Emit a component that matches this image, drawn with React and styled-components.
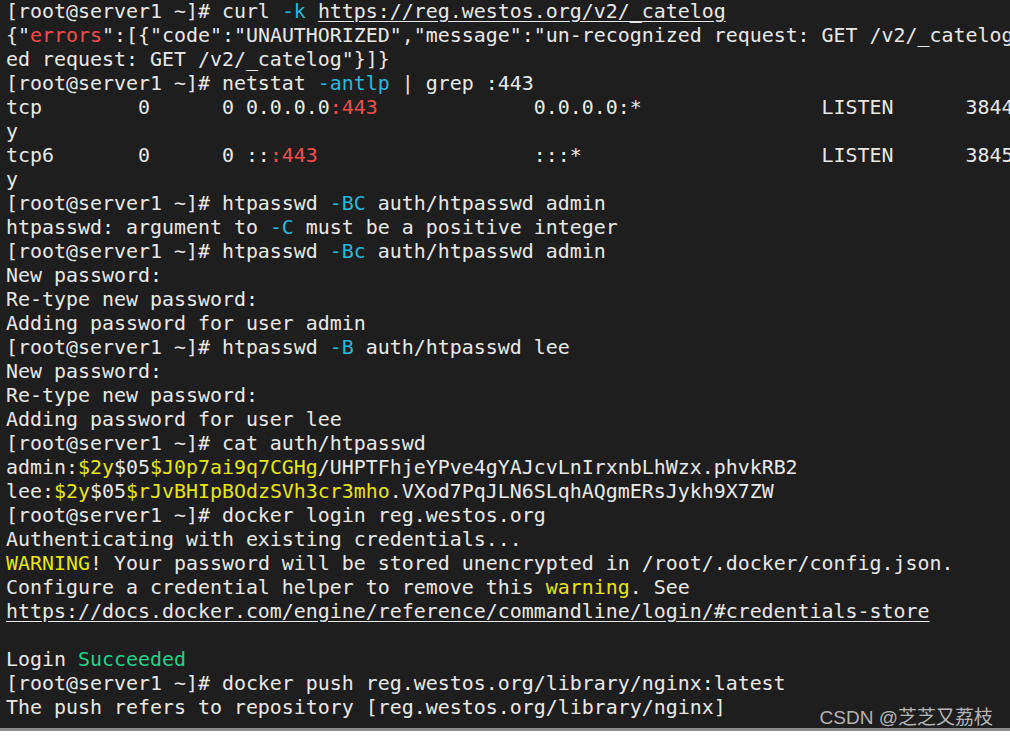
import React from "react";
import styled, { createGlobalStyle, css } from "styled-components";

const GlobalStyle = createGlobalStyle`
  html, body {
    margin: 0;
    padding: 0;
    background: #ffffff;
  }
`;

const TERMINAL = styled.div`
  position: relative;
  width: 1010px;
  height: 731px;
  box-sizing: border-box;
  padding: 0 0 0 6px;
  background: #1e1e1e;
  border-bottom: 3px solid #8c8c8c;
  overflow: hidden;
  font-family: "DejaVu Sans Mono", "Liberation Mono", monospace;
  font-size: 19.93px;
  line-height: 24px;
  color: #e8e8e8;
`;

const LINE = styled.div`
  height: 24px;
  white-space: pre;
`;

const colors = {
  red: "#f14c4c",
  cyan: "#29b8db",
  yellow: "#e5e510",
  green: "#23d18b",
};

const TOKEN = styled.span`
  color: ${(props) => colors[props.kind] || "inherit"};
  ${(props) =>
    props.kind === "link" &&
    css`
      text-decoration: underline;
      text-underline-offset: 3px;
    `}
`;

const WATERMARK = styled.div`
  position: absolute;
  right: 17px;
  bottom: 0;
  font-family: "Liberation Sans", "Noto Sans CJK SC", sans-serif;
  font-size: 19px;
  line-height: 20px;
  color: #b4b4b4;
  white-space: nowrap;
`;

const P = "[root@server1 ~]# ";

// each line is a list of [text, kind]
const lines = [
  [[P + "curl "], ["-k", "cyan"], [" "], ["https://reg.westos.org/v2/_catelog", "link"]],
  [['{"'], ["errors", "red"], ['":[{"code":"UNAUTHORIZED","message":"un-recognized request: GET /v2/_catelog']],
  [['ed request: GET /v2/_catelog"}]}']],
  [[P + "netstat "], ["-antlp", "cyan"], [" | grep :443"]],
  [["tcp        0      0 0.0.0.0"], [":443", "red"], ["             0.0.0.0:*               LISTEN      3844"]],
  [["y"]],
  [["tcp6       0      0 ::"], [":443", "red"], ["                  :::*                    LISTEN      3845"]],
  [["y"]],
  [[P + "htpasswd "], ["-BC", "cyan"], [" auth/htpasswd admin"]],
  [["htpasswd: argument to "], ["-C", "cyan"], [" must be a positive integer"]],
  [[P + "htpasswd "], ["-Bc", "cyan"], [" auth/htpasswd admin"]],
  [["New password:"]],
  [["Re-type new password:"]],
  [["Adding password for user admin"]],
  [[P + "htpasswd "], ["-B", "cyan"], [" auth/htpasswd lee"]],
  [["New password:"]],
  [["Re-type new password:"]],
  [["Adding password for user lee"]],
  [[P + "cat auth/htpasswd"]],
  [["admin:"], ["$2y", "yellow"], ["$05"], ["$J0p7ai9q7CGHg", "yellow"], ["/UHPTFhjeYPve4gYAJcvLnIrxnbLhWzx.phvkRB2"]],
  [["lee:"], ["$2y", "yellow"], ["$05"], ["$rJvBHIpBOdzSVh3cr3mho", "yellow"], [".VXod7PqJLN6SLqhAQgmERsJykh9X7ZW"]],
  [[P + "docker login reg.westos.org"]],
  [["Authenticating with existing credentials..."]],
  [["WARNING", "yellow"], ["! Your password will be stored unencrypted in /root/.docker/config.json."]],
  [["Configure a credential helper to remove this "], ["warning", "yellow"], [". See"]],
  [["https://docs.docker.com/engine/reference/commandline/login/#credentials-store", "link"]],
  [[""]],
  [["Login "], ["Succeeded", "green"]],
  [[P + "docker push reg.westos.org/library/nginx:latest"]],
  [["The push refers to repository [reg.westos.org/library/nginx]"]],
];

const App = () => {
  return (
    <>
      <GlobalStyle />
      <TERMINAL>
        {lines.map((segs, i) => (
          <LINE key={i}>
            {segs.map(([text, kind], j) => (
              <TOKEN key={j} kind={kind}>
                {text}
              </TOKEN>
            ))}
          </LINE>
        ))}
        <WATERMARK>CSDN @芝芝又荔枝</WATERMARK>
      </TERMINAL>
    </>
  );
};

export default App;
